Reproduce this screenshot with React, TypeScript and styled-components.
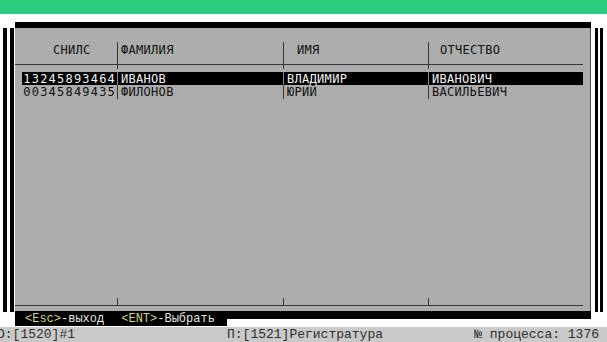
import React from 'react'
import styled, { createGlobalStyle } from 'styled-components'

const GlobalStyle = createGlobalStyle`
  html, body {
    margin: 0;
    padding: 0;
    background: #fff;
  }
  body {
    width: 607px;
    height: 342px;
    overflow: hidden;
    font-family: 'Liberation Mono', 'Courier New', monospace;
  }
`

const Screen = styled.div`
  display: flex;
  flex-direction: column;
  width: 607px;
  height: 342px;
  background: #fff;
  overflow: hidden;
`

const TitleBar = styled.div`
  height: 14px;
  flex-shrink: 0;
  background: #2ecd80;
`

const Frame = styled.div`
  display: flex;
  height: 304px;
  margin-top: 8px;
  padding-left: 3px;
`

const Rail = styled.div<{ $w: number; $gap: number }>`
  width: ${p => p.$w}px;
  margin: 6px ${p => p.$gap}px 14px 0;
  background: #000;
  flex-shrink: 0;
`

const Window = styled.div`
  display: flex;
  flex-direction: column;
  width: 576px;
  margin-right: 4px;
  flex-shrink: 0;
`

const TopBorder = styled.div`
  height: 6px;
  background: #000;
`

const Panel = styled.div`
  flex: 1;
  display: flex;
  flex-direction: column;
  background: #acacac;
  border-right: 1px solid #4a4a4a;
  padding: 14px 7px 5px 0;
  font-family: 'DejaVu Sans Mono', monospace;
  font-size: 12px;
  color: #111;
`

const cols = '102px 166px 145px 155px'

const HeaderRow = styled.div`
  display: grid;
  grid-template-columns: ${cols};
  height: 22px;
  border-bottom: 1px solid #3a3a3a;
`

const HeaderCell = styled.div<{ $pad: number; $divider?: boolean }>`
  padding-left: ${p => p.$pad}px;
  line-height: 17px;
  letter-spacing: 0.3px;
  border-left: ${p => (p.$divider ? '1px solid #333' : 'none')};
`

const TickRow = styled.div<{ $h: number; $line?: boolean }>`
  display: grid;
  grid-template-columns: ${cols};
  height: ${p => p.$h}px;
  border-bottom: ${p => (p.$line ? '1px solid #3a3a3a' : 'none')};
`

const Tick = styled.div<{ $divider?: boolean }>`
  border-left: ${p => (p.$divider ? '1px solid #333' : 'none')};
`

const Gap = styled.div`
  height: 3px;
`

const Row = styled.div<{ $selected?: boolean }>`
  display: grid;
  grid-template-columns: 95px 166px 145px 155px;
  margin-left: 7px;
  height: 13px;
  line-height: 14px;
  background: ${p => (p.$selected ? '#000' : 'transparent')};
  color: ${p => (p.$selected ? '#f2f2f2' : '#111')};
`

const NumberCell = styled.div`
  text-align: right;
  padding-right: 1px;
  letter-spacing: 1.2px;
  white-space: nowrap;
`

const NameCell = styled.div<{ $selected?: boolean }>`
  padding-left: 3px;
  letter-spacing: 0.3px;
  white-space: nowrap;
  border-left: 1px solid ${p => (p.$selected ? '#8a8a8a' : '#333')};
`

const Body = styled.div`
  flex: 1;
`

const FooterRow = styled.div`
  display: flex;
  align-items: flex-start;
  height: 15px;
`

const KeyHints = styled.div`
  display: flex;
  width: 202px;
  height: 15px;
  padding-left: 10px;
  background: #000;
  font-size: 12px;
  line-height: 17px;
  white-space: pre;
`

const Hint = styled.span<{ $offset?: number }>`
  margin-left: ${p => p.$offset || 0}px;
  color: #e6e6e6;
`

const Key = styled.span`
  color: #d6d67a;
`

const FooterFill = styled.div`
  flex: 1;
  height: 8px;
  background: #000;
`

const StatusBar = styled.div`
  display: flex;
  height: 15px;
  margin-top: 1px;
  background: #c9c9c9;
  color: #2e2e2e;
  font-size: 13px;
  line-height: 16px;
  white-space: pre;
`

const StatusItem = styled.span<{ $width?: number; $offset?: number }>`
  width: ${p => (p.$width ? p.$width + 'px' : 'auto')};
  margin-left: ${p => p.$offset || 0}px;
  flex-shrink: 0;
`

const StatusRight = styled.span`
  margin-left: auto;
  padding-right: 8px;
`

const headers = [
  { title: 'СНИЛС', pad: 38 },
  { title: 'ФАМИЛИЯ', pad: 3 },
  { title: 'ИМЯ', pad: 13 },
  { title: 'ОТЧЕСТВО', pad: 11 }
]

const people = [
  { snils: '13245893464', last: 'ИВАНОВ', first: 'ВЛАДИМИР', middle: 'ИВАНОВИЧ' },
  { snils: '00345849435', last: 'ФИЛОНОВ', first: 'ЮРИЙ', middle: 'ВАСИЛЬЕВИЧ' }
]

const Ticks: React.FC<{ h: number; line?: boolean }> = ({ h, line }) => (
  <TickRow $h={h} $line={line}>
    <Tick />
    <Tick $divider />
    <Tick $divider />
    <Tick $divider />
  </TickRow>
)

const App: React.FC = () => {
  const selected = 0

  return (
    <Screen>
      <GlobalStyle />
      <TitleBar />
      <Frame>
        <Rail $w={4} $gap={3} />
        <Rail $w={4} $gap={1} />
        <Window>
          <TopBorder />
          <Panel>
            <HeaderRow>
              {headers.map((h, i) => (
                <HeaderCell key={h.title} $pad={h.pad} $divider={i > 0}>
                  {h.title}
                </HeaderCell>
              ))}
            </HeaderRow>
            <Ticks h={4} />
            <Gap />
            {people.map((p, i) => (
              <Row key={p.snils} $selected={i === selected}>
                <NumberCell>{p.snils}</NumberCell>
                <NameCell $selected={i === selected}>{p.last}</NameCell>
                <NameCell $selected={i === selected}>{p.first}</NameCell>
                <NameCell $selected={i === selected}>{p.middle}</NameCell>
              </Row>
            ))}
            <Body />
            <Ticks h={7} line />
          </Panel>
          <FooterRow>
            <KeyHints>
              <Hint><Key>&lt;Esc&gt;</Key>-выход</Hint>
              <Hint $offset={17}><Key>&lt;ENT&gt;</Key>-Выбрать</Hint>
            </KeyHints>
            <FooterFill />
          </FooterRow>
        </Window>
        <Rail $w={3} $gap={2} />
        <Rail $w={3} $gap={0} />
      </Frame>
      <StatusBar>
        <StatusItem $width={230} $offset={-3}>О:[1520]#1</StatusItem>
        <StatusItem>П:[1521]Регистратура</StatusItem>
        <StatusRight>№ процесса: 1376</StatusRight>
      </StatusBar>
    </Screen>
  )
}

export default App
